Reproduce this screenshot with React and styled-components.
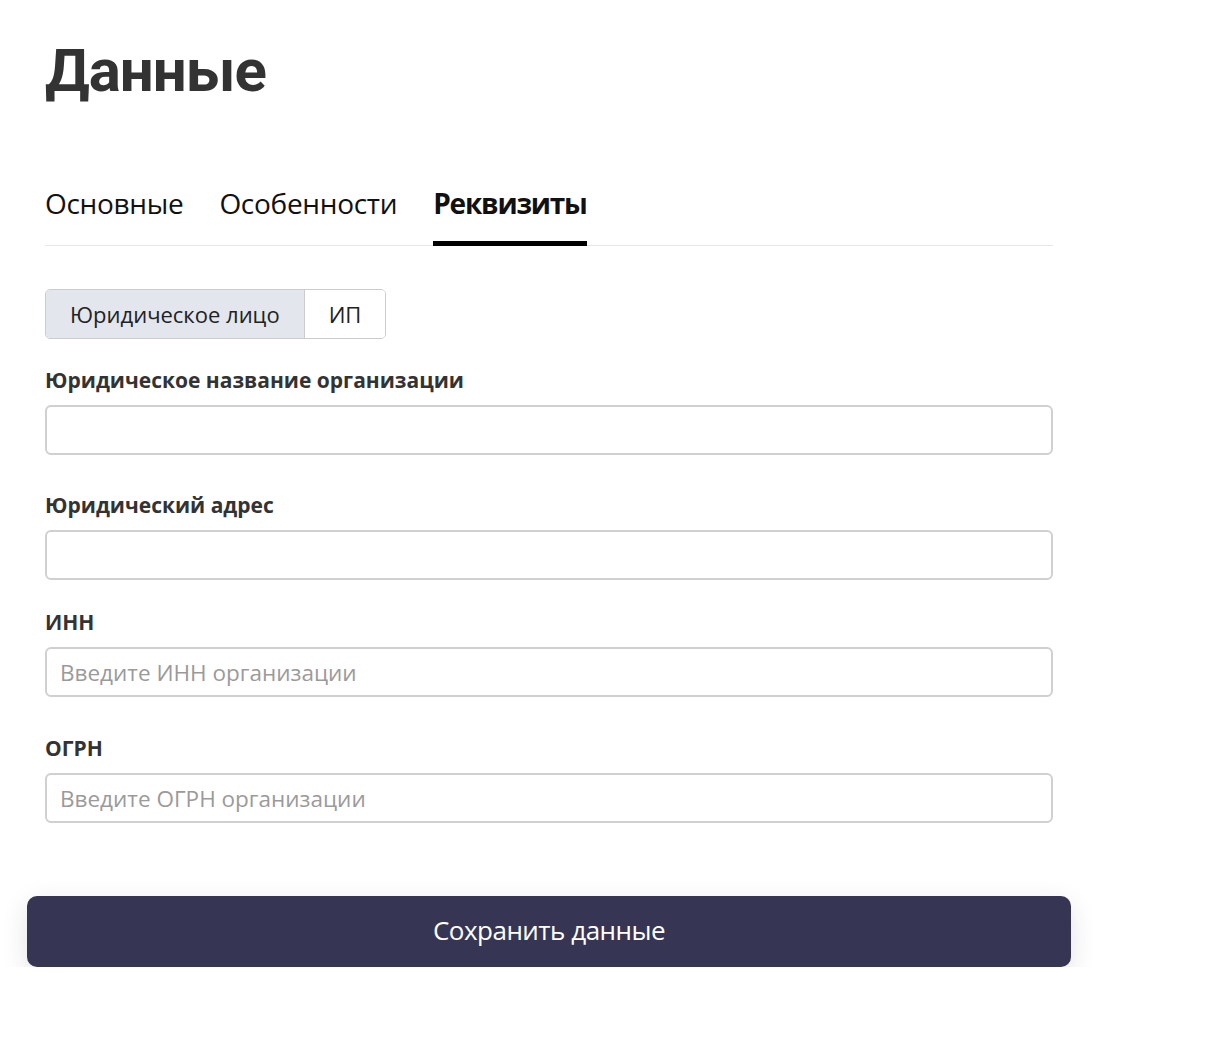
import React, { useState } from "react";
import styled, { createGlobalStyle } from "styled-components";

const GlobalStyle = createGlobalStyle`
  body {
    margin: 0;
    background: #fff;
    font-family: "Open Sans", "Liberation Sans", sans-serif;
    color: #333;
  }
  * { box-sizing: border-box; }
`;

const Page = styled.div`
  width: 1008px;
  margin-left: 45px;
  padding-top: 41px;
`;

const Title = styled.h1`
  margin: 0;
  font-family: Roboto, "Open Sans", sans-serif;
  font-size: 60px;
  line-height: 1;
  font-weight: 700;
  letter-spacing: -1px;
  color: #333;
`;

const Tabs = styled.div`
  display: flex;
  gap: 36px;
  margin-top: 88px;
  border-bottom: 1px solid #e8e8e8;
`;

const Tab = styled.div`
  font-size: 28px;
  line-height: 1;
  padding-bottom: 24px;
  margin-bottom: -1px;
  color: #111;
  font-weight: ${(p) => (p.active ? 700 : 400)};
  letter-spacing: ${(p) => (p.active ? "-1.2px" : "-0.3px")};
  border-bottom: 5px solid ${(p) => (p.active ? "#000" : "transparent")};
  cursor: pointer;
`;

const Segmented = styled.div`
  display: inline-flex;
  margin-top: 43px;
  border: 1.5px solid #ccc;
  border-radius: 5px;
  overflow: hidden;
  height: 50px;
`;

const Segment = styled.button`
  font-family: inherit;
  font-size: 22px;
  color: #222;
  border: none;
  padding: 0 24px;
  background: ${(p) => (p.active ? "#e3e6ec" : "#fff")};
  border-right: ${(p) => (p.last ? "none" : "1.5px solid #ccc")};
  cursor: pointer;
`;

const Field = styled.div`
  display: flex;
  flex-direction: column;
  gap: 14px;
  margin-top: ${(p) => p.top}px;
`;

const Label = styled.label`
  font-size: 21px;
  line-height: 1;
  font-weight: 700;
  color: #333;
`;

const Input = styled.input`
  height: 50px;
  width: 100%;
  border: 2px solid #d0d0d0;
  border-radius: 6px;
  padding: 0 13px;
  font-family: inherit;
  font-size: 22.5px;
  color: #333;
  outline: none;
  &::placeholder {
    color: #9a9a9a;
  }
`;

const SaveButton = styled.button`
  display: block;
  width: 1044px;
  height: 71px;
  margin: 73px 0 0 -18px;
  padding-bottom: 4px;
  border: none;
  border-radius: 10px;
  background: #363654;
  color: #fff;
  font-family: inherit;
  font-size: 26px;
  letter-spacing: -0.5px;
  box-shadow: 0 8px 26px rgba(40, 40, 70, 0.13);
  cursor: pointer;
`;

const fields = [
  { label: "Юридическое название организации", top: 31, placeholder: "" },
  { label: "Юридический адрес", top: 40, placeholder: "" },
  { label: "ИНН", top: 32, placeholder: "Введите ИНН организации" },
  { label: "ОГРН", top: 41, placeholder: "Введите ОГРН организации" },
];

const App = () => {
  const [kind, setKind] = useState("ul");
  return (
    <>
      <GlobalStyle />
      <Page>
        <Title>Данные</Title>
        <Tabs>
          <Tab>Основные</Tab>
          <Tab>Особенности</Tab>
          <Tab active>Реквизиты</Tab>
        </Tabs>
        <Segmented>
          <Segment active={kind === "ul"} onClick={() => setKind("ul")}>
            Юридическое лицо
          </Segment>
          <Segment last active={kind === "ip"} onClick={() => setKind("ip")}>
            ИП
          </Segment>
        </Segmented>
        {fields.map((f) => (
          <Field key={f.label} top={f.top}>
            <Label>{f.label}</Label>
            <Input placeholder={f.placeholder} />
          </Field>
        ))}
        <SaveButton>Сохранить данные</SaveButton>
      </Page>
    </>
  );
};

export default App;
